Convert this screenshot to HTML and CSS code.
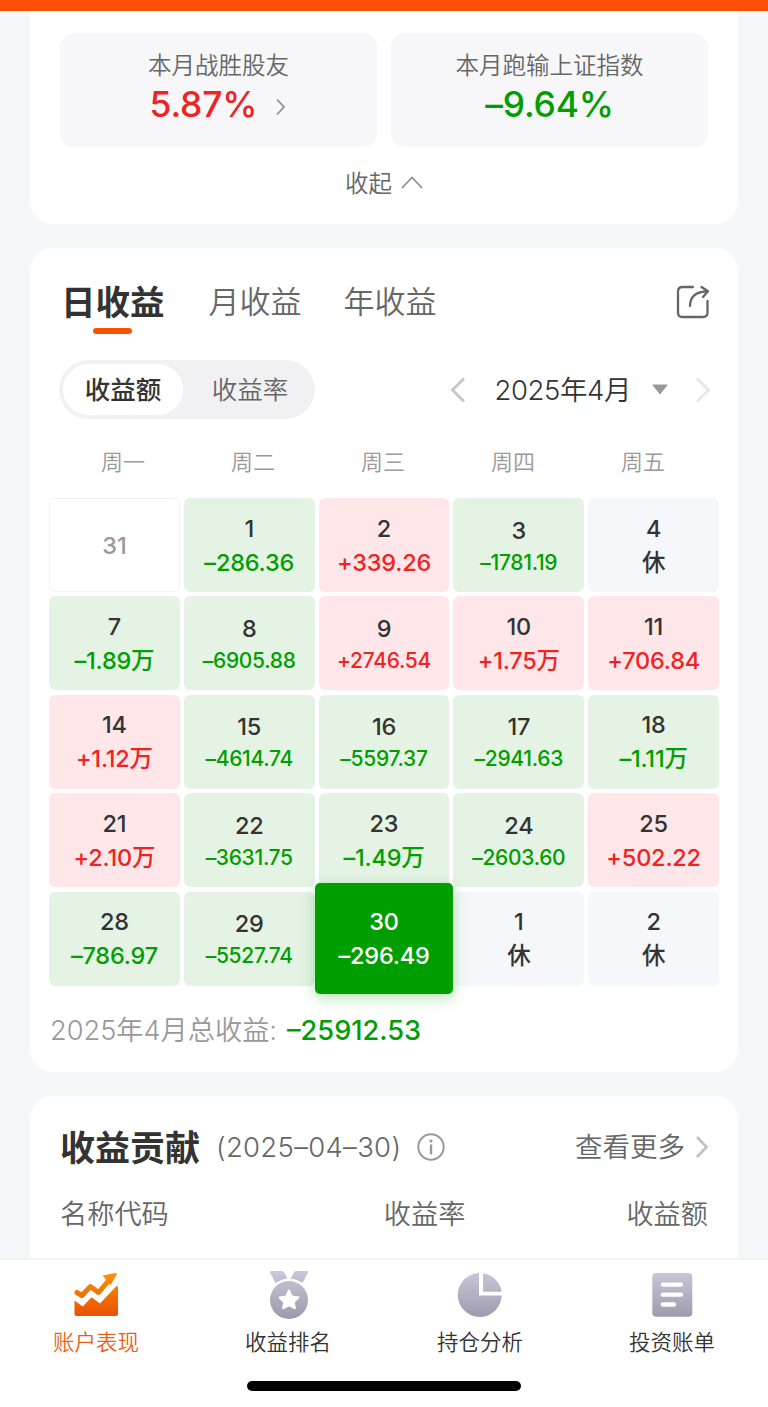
FILE: index.html
```
<!DOCTYPE html>
<html lang="zh-CN">

<head>
    <meta charset="UTF-8">
    <meta name="viewport" content="width=device-width, initial-scale=1.0">
    <title>账户表现</title>
    <link rel="stylesheet" href="styles.css">
</head>

<body>
    <div class="topbar"></div>

    <main class="content">
        <section class="card summary">
            <div class="stats">
                <div class="stat">
                    <div class="stat-label">本月战胜股友</div>
                    <div class="stat-value red">
                        <span>5.87%</span>
                        <svg class="stat-arrow" width="12" height="18" viewBox="0 0 12 18" fill="none" stroke="#909090" stroke-width="1.8"><path d="M2 1.5l7 7.5L2 16.5"/></svg>
                    </div>
                </div>
                <div class="stat">
                    <div class="stat-label">本月跑输上证指数</div>
                    <div class="stat-value green"><span>–9.64%</span></div>
                </div>
            </div>
            <div class="collapse">
                <span>收起</span>
                <svg width="22" height="13" viewBox="0 0 22 13" fill="none" stroke="#909090" stroke-width="1.8"><path d="M1 12L11 1.5 21 12"/></svg>
            </div>
        </section>

        <section class="card calendar-card">
            <div class="tabs">
                <div class="tab active">日收益</div>
                <div class="tab">月收益</div>
                <div class="tab">年收益</div>
                <svg class="share" width="34" height="34" viewBox="0 0 34 34" fill="none" stroke="#666" stroke-width="2.3" stroke-linecap="round" stroke-linejoin="round">
                    <path d="M17 2H6.500Q2 2 2 6.500V27.500Q2 32 6.500 32H27Q31.500 32 31.500 27.500V16"/>
                    <path d="M14 21C14 12 19 6.500 32 6.300M25.500 2L32 6.300 27 12"/>
                </svg>
            </div>

            <div class="toolbar">
                <div class="switch">
                    <div class="switch-item on">收益额</div>
                    <div class="switch-item">收益率</div>
                </div>
                <div class="month">
                    <svg width="16" height="26" viewBox="0 0 16 26" fill="none" stroke="#c8c8c8" stroke-width="3"><path d="M14 1.5L2.5 13 14 24.5"/></svg>
                    <span class="month-text">2025年4月</span>
                    <svg class="caret" width="16" height="11" viewBox="0 0 16 11" fill="#999"><path d="M0 .5h16L8 10.5z"/></svg>
                    <svg width="16" height="26" viewBox="0 0 16 26" fill="none" stroke="#e8e8e8" stroke-width="3"><path d="M2 1.5L13.5 13 2 24.5"/></svg>
                </div>
            </div>

            <div class="weekdays">
                <span>周一</span>
                <span>周二</span>
                <span>周三</span>
                <span>周四</span>
                <span>周五</span>
            </div>

            <div class="days">
                <div class="day out"><b>31</b></div>
                <div class="day loss"><b>1</b><i>–286.36</i></div>
                <div class="day gain"><b>2</b><i>+339.26</i></div>
                <div class="day loss"><b>3</b><i class="long">–1781.19</i></div>
                <div class="day rest"><b>4</b><i>休</i></div>

                <div class="day loss"><b>7</b><i>–1.89万</i></div>
                <div class="day loss"><b>8</b><i class="long">–6905.88</i></div>
                <div class="day gain"><b>9</b><i class="long">+2746.54</i></div>
                <div class="day gain"><b>10</b><i>+1.75万</i></div>
                <div class="day gain"><b>11</b><i>+706.84</i></div>

                <div class="day gain"><b>14</b><i>+1.12万</i></div>
                <div class="day loss"><b>15</b><i class="long">–4614.74</i></div>
                <div class="day loss"><b>16</b><i class="long">–5597.37</i></div>
                <div class="day loss"><b>17</b><i class="long">–2941.63</i></div>
                <div class="day loss"><b>18</b><i>–1.11万</i></div>

                <div class="day gain"><b>21</b><i>+2.10万</i></div>
                <div class="day loss"><b>22</b><i class="long">–3631.75</i></div>
                <div class="day loss"><b>23</b><i>–1.49万</i></div>
                <div class="day loss"><b>24</b><i class="long">–2603.60</i></div>
                <div class="day gain"><b>25</b><i>+502.22</i></div>

                <div class="day loss"><b>28</b><i>–786.97</i></div>
                <div class="day loss"><b>29</b><i class="long">–5527.74</i></div>
                <div class="day selected"><b>30</b><i>–296.49</i></div>
                <div class="day rest"><b>1</b><i>休</i></div>
                <div class="day rest"><b>2</b><i>休</i></div>
            </div>

            <div class="total">
                <span>2025年4月总收益:</span>
                <span class="total-value green">–25912.53</span>
            </div>
        </section>

        <section class="card contribution">
            <div class="contribution-head">
                <h2>收益贡献</h2>
                <span class="date">(2025–04–30)</span>
                <svg width="28" height="28" viewBox="0 0 28 28" fill="none" stroke="#999" stroke-width="2">
                    <circle cx="14" cy="14" r="12.7"/>
                    <path d="M14 11.5V21.5" stroke-width="2.4"/>
                    <circle cx="14" cy="8" r="1.5" fill="#999" stroke="none"/>
                </svg>
                <span class="more">查看更多</span>
                <svg width="14" height="24" viewBox="0 0 14 24" fill="none" stroke="#c4c4c4" stroke-width="2.8"><path d="M3 2L12.5 12 3 22"/></svg>
            </div>
            <div class="columns">
                <span>名称代码</span>
                <span>收益率</span>
                <span>收益额</span>
            </div>
        </section>
    </main>

    <nav class="tabbar">
        <div class="nav-items">
            <a class="nav-item current">
                <svg width="48" height="48" viewBox="0 0 48 48">
                    <defs>
                        <linearGradient id="orange" gradientUnits="userSpaceOnUse" x1="0" y1="2" x2="0" y2="46">
                            <stop offset="0" stop-color="#fb9208"/>
                            <stop offset="1" stop-color="#e95000"/>
                        </linearGradient>
                    </defs>
                    <path d="M5 21.500L10 24.500 18.300 15.500 26.500 21.500 38 8" fill="none" stroke="url(#orange)" stroke-width="5" stroke-linecap="round" stroke-linejoin="round"/>
                    <path d="M30.500 4.500L43.500 2Q45.500 2 44.500 4L38.500 14z" fill="url(#orange)"/>
                    <path d="M2.500 29.500L10.700 35.500 19.500 26.300 28 32.500 44 15.500Q46 14 46 16.500V43Q46 45 44 45H4.500Q2.500 45 2.500 43z" fill="url(#orange)"/>
                </svg>
                <span>账户表现</span>
            </a>
            <a class="nav-item">
                <svg width="48" height="48" viewBox="0 0 48 48">
                    <defs>
                        <linearGradient id="grey" gradientUnits="userSpaceOnUse" x1="0" y1="0" x2="0" y2="48">
                            <stop offset="0" stop-color="#c9c7d9"/>
                            <stop offset="1" stop-color="#9b99aa"/>
                        </linearGradient>
                    </defs>
                    <path d="M6.500 0H18Q19.500 0 20.200 1.500L23.500 7.500Q16 8.500 11.500 12L6 1.500Q5.500 0 6.500 0zM43.500 0H32Q30.500 0 30 1.500L26.500 7.500Q34 8.500 38.500 12L44 1.500Q44.500 0 43.500 0z" fill="url(#grey)"/>
                    <circle cx="25" cy="29" r="19" fill="url(#grey)"/>
                    <path d="M25 19.500L27.800 25.500 34.500 26.400 29.700 30.900 30.900 37.300 25 34.200 19.100 37.300 20.300 30.900 15.500 26.400 22.200 25.500z" fill="#fff" stroke="#fff" stroke-width="2" stroke-linejoin="round"/>
                </svg>
                <span>收益排名</span>
            </a>
            <a class="nav-item">
                <svg width="48" height="48" viewBox="0 0 48 48" fill="url(#grey)">
                    <path d="M23 2A22 22 0 1 0 45.700 24.500H23z"/>
                    <path d="M27 2.200A22 22 0 0 1 45.700 20.800H27z"/>
                </svg>
                <span>持仓分析</span>
            </a>
            <a class="nav-item">
                <svg width="48" height="48" viewBox="0 0 48 48">
                    <rect x="4.3" y="2" width="40" height="43.7" rx="4" fill="url(#grey)"/>
                    <path d="M14.800 13.700H33M14.800 23.700H33M14.800 33.500H26" stroke="#fff" stroke-width="4.3" stroke-linecap="round"/>
                </svg>
                <span>投资账单</span>
            </a>
        </div>
        <div class="home-indicator"></div>
    </nav>
</body>

</html>
```
FILE: styles.css
```
* {
    box-sizing: border-box;
}

body {
    display: flex;
    flex-direction: column;
    height: 1407px;
    margin: 0;
    overflow: hidden;
    background: #f6f7fa;
    color: #333;
    font-family: Inter, "Noto Sans CJK SC", sans-serif;
}

svg {
    display: block;
    flex: none;
}

.topbar {
    flex: none;
    height: 11px;
    background: #ff5006;
}

.content {
    flex: 1;
    min-height: 0;
    padding: 0 30px;
    overflow: hidden;
}

.card {
    margin-bottom: 24px;
    background: #fff;
    border-radius: 22px;
}

.red {
    color: #f02323;
}

.green {
    color: #009e00;
}

/* monthly summary */
.summary {
    height: 213px;
    padding: 22px 30px 0;
    border-radius: 0 0 22px 22px;
}

.stats {
    display: grid;
    grid-template-columns: 1fr 1fr;
    gap: 14px;
}

.stat {
    height: 114px;
    padding-top: 16px;
    background: #f7f7fa;
    border-radius: 14px;
    text-align: center;
}

.stat-label {
    color: #666;
    font-size: 23.5px;
    font-weight: 350;
    line-height: 34px;
}

.stat-value {
    display: flex;
    align-items: center;
    justify-content: center;
    font-size: 35.5px;
    font-weight: 500;
    line-height: 43px;
    letter-spacing: -0.2px;
}

.stat-arrow {
    margin: 5px 0 0 18px;
}

.collapse {
    display: flex;
    align-items: center;
    justify-content: center;
    gap: 9px;
    margin-top: 20px;
    color: #666;
    font-size: 23.5px;
    font-weight: 350;
    line-height: 34px;
}

.collapse svg {
    margin-top: -3px;
}

/* calendar */
.calendar-card {
    height: 824px;
    padding: 31px 19px 0;
}

.tabs {
    display: flex;
    align-items: center;
    height: 46px;
    padding: 0 9px 0 12px;
}

.tab {
    margin-right: 42px;
    color: #666;
    font-size: 31px;
    font-weight: 350;
    line-height: 46px;
}

.tab.active {
    position: relative;
    margin-right: 44px;
    padding-top: 2px;
    color: #333;
    font-size: 34.5px;
    font-weight: 700;
}

.tab.active::after {
    content: "";
    position: absolute;
    left: 32px;
    bottom: -8px;
    width: 39px;
    height: 6px;
    background: #ff5006;
    border-radius: 3px;
}

.share {
    margin-left: auto;
}

.toolbar {
    display: flex;
    align-items: center;
    justify-content: space-between;
    margin-top: 35px;
    padding: 0 8px 0 10px;
}

.switch {
    display: flex;
    width: 256px;
    height: 59px;
    padding: 4px;
    background: #f1f1f4;
    border-radius: 30px;
}

.switch-item {
    flex: none;
    width: 120px;
    color: #666;
    font-size: 25.5px;
    font-weight: 350;
    line-height: 52px;
    text-align: center;
}

.switch-item:last-child {
    width: 134px;
}

.switch-item.on {
    color: #333;
    font-weight: 500;
    background: #fff;
    border-radius: 26px;
}

.month {
    display: flex;
    align-items: center;
}

.month-text {
    margin-left: 28px;
    font-size: 27.5px;
    font-weight: 350;
    line-height: 40px;
    letter-spacing: -0.4px;
}

.caret {
    margin: 0 27px 0 21px;
}

.weekdays {
    display: grid;
    grid-template-columns: repeat(5, 130px);
    margin: 27px 0 0 9px;
    color: #999;
    font-size: 22px;
    font-weight: 350;
    line-height: 32px;
    text-align: center;
}

.days {
    display: grid;
    grid-template-columns: repeat(5, 1fr);
    grid-auto-rows: 94px;
    gap: 4.4px 4px;
    margin-top: 20px;
}

.day {
    display: flex;
    flex-direction: column;
    align-items: center;
    justify-content: center;
    padding-top: 1.4px;
    border-radius: 6px;
    font-size: 23.5px;
    line-height: 34px;
    white-space: nowrap;
}

.day b,
.day i {
    font-style: normal;
    font-weight: 500;
    letter-spacing: -0.2px;
}

.day .long {
    font-size: 21px;
    line-height: 30px;
    letter-spacing: -0.3px;
}

.loss {
    background: #e5f3e5;
}

.gain {
    background: #ffe7e9;
}

.rest {
    background: #f6f7fa;
}

.out {
    border: 1px solid #f2f2f2;
}

.out b {
    color: #999;
}

.loss i {
    color: #009e00;
}

.gain i {
    color: #f02323;
}

.selected {
    z-index: 1;
    margin: -8.5px -3.5px;
    background: #009e00;
    border-radius: 5px;
    box-shadow: 0 4px 16px rgba(0, 158, 0, 0.3);
    color: #fff;
}

.total {
    display: flex;
    align-items: center;
    margin-top: 25px;
    padding-left: 1px;
    color: #999;
    font-size: 27.2px;
    font-weight: 350;
    line-height: 40px;
}

.total-value {
    margin-left: 10px;
    font-weight: 500;
}

/* contribution */
.contribution {
    height: 200px;
    padding: 29px 30px 0;
}

.contribution-head {
    display: flex;
    align-items: center;
    height: 44px;
}

h2 {
    margin: 0;
    padding-top: 2px;
    font-size: 35px;
    font-weight: 700;
    line-height: 44px;
}

.date {
    margin: 0 16px;
    color: #666;
    font-size: 27.5px;
    font-weight: 350;
    letter-spacing: 0.3px;
}

.more {
    margin: 0 9px 0 auto;
    color: #666;
    font-size: 27.5px;
    font-weight: 350;
    line-height: 40px;
}

.columns {
    display: flex;
    margin-top: 26px;
    color: #666;
    font-size: 27.2px;
    font-weight: 350;
    line-height: 40px;
}

.columns span:nth-child(2) {
    margin: 0 161px 0 auto;
}

/* bottom bar */
.tabbar {
    flex: none;
    height: 149px;
    background: #fff;
    border-top: 2px solid #f2f2f2;
}

.nav-items {
    display: grid;
    grid-template-columns: repeat(4, 1fr);
    padding-top: 11px;
}

.nav-item {
    display: flex;
    flex-direction: column;
    align-items: center;
    color: #333;
    font-size: 21.5px;
    font-weight: 350;
    line-height: 32px;
}

.nav-item span {
    margin-top: 7px;
}

.nav-item.current {
    color: #ea5f1b;
}

.home-indicator {
    width: 274px;
    height: 10px;
    margin: 23px auto 0;
    background: #000;
    border-radius: 5px;
}
```
